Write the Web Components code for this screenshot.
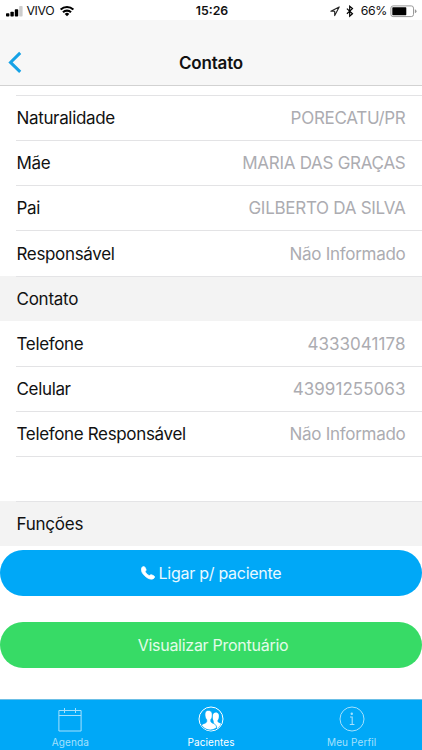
<!DOCTYPE html>
<html lang="pt-BR">
<head>
<meta charset="utf-8">
<meta name="viewport" content="width=device-width, initial-scale=1">
<title>Contato</title>
<style>
    body {
        margin: 0;
        background: #fff;
        color: #111;
        font-family: Inter, "Liberation Sans", sans-serif;
    }
</style>
</head>
<body>
<contact-app></contact-app>

<script>
class StatusBar extends HTMLElement {
    constructor() {
        super();
        this.attachShadow({ mode: "open" });
    }

    connectedCallback() {
        this.shadowRoot.innerHTML = `
            <style>
                :host {
                    display: grid;
                    grid-template-columns: 1fr auto 1fr;
                    align-items: center;
                    height: 20px;
                    flex: none;
                    padding: 0 5px 0 6px;
                    box-sizing: border-box;
                    background: #fff;
                    font-size: 12.3px;
                    line-height: 20px;
                }
                div { display: flex; align-items: center; height: 20px; }
                .right { justify-content: flex-end; }
                svg { display: block; flex: none; }
                .carrier { margin: 1px 6px 0 3.5px; letter-spacing: -0.4px; }
                .time { font-weight: 600; font-size: 12.3px; margin: 1px 0 0 1px; }
                .percent { margin: 1px 3px 0 7px; letter-spacing: -0.4px; }
            </style>
            <div>
                <svg width="17" height="20" viewBox="0 0 17 20">
                    <rect x="0" y="12.2" width="3.4" height="3.3" rx=".8"/>
                    <rect x="4.4" y="10.7" width="3.4" height="4.8" rx=".8"/>
                    <rect x="8.8" y="8.2" width="3.4" height="7.3" rx=".8"/>
                    <rect x="13.2" y="5" width="3.4" height="10.5" rx=".8" fill="#ccc"/>
                </svg>
                <span class="carrier">VIVO</span>
                <svg width="14" height="20" viewBox="0 0 14 20" fill="none" stroke="#000" stroke-width="2.1">
                    <path d="M.7 8.6a8.9 8.9 0 0 1 12.6 0"/>
                    <path d="M3 11.3a5.600 5.600 0 0 1 8 0"/>
                    <path d="M7 15.3L4.700 13a3.200 3.200 0 0 1 4.600 0z" fill="#000" stroke="none"/>
                </svg>
            </div>
            <span class="time">15:26</span>
            <div class="right">
                <svg width="10" height="20" viewBox="0 0 10 20" fill="none" stroke="#222" stroke-width="1.1">
                    <path d="M9.2 5.9L.9 10.2h3.8v4.4z" stroke-linejoin="round"/>
                </svg>
                <svg width="8" height="20" viewBox="0 0 8 20" style="margin-left:6px" fill="none" stroke="#000" stroke-width="1.2">
                    <path d="M.9 7.6l5.600 5.200-2.800 2.400V5.200l2.800 2.400L.9 12.800"/>
                </svg>
                <span class="percent">66%</span>
                <svg width="27" height="20" viewBox="0 0 27 20">
                    <rect x=".9" y="4.9" width="22.6" height="10.7" rx="2.2" fill="none" stroke="#999"/>
                    <rect x="2.3" y="6.3" width="14" height="7.9" rx=".6"/>
                    <path d="M24.8 8.2q1.7.4 1.7 2t-1.7 2z" fill="#999"/>
                </svg>
            </div>
        `;
    }
}
customElements.define("status-bar", StatusBar);

class NavHeader extends HTMLElement {
    constructor() {
        super();
        this.attachShadow({ mode: "open" });
    }

    connectedCallback() {
        this.shadowRoot.innerHTML = `
            <style>
                :host {
                    display: grid;
                    grid-template-columns: 32px 1fr 32px;
                    align-items: center;
                    height: 66px;
                    flex: none;
                    box-sizing: border-box;
                    padding-top: 20px;
                    background: #f7f7f7;
                    border-bottom: 1px solid #d2d2d2;
                }
                svg { display: block; }
                h1 {
                    margin: 0;
                    font-size: 17px;
                    font-weight: 600;
                    line-height: 22px;
                    letter-spacing: -0.2px;
                    text-align: center;
                }
            </style>
            <svg width="32" height="24" viewBox="0 0 32 24" fill="none" stroke="#15a2e6" stroke-width="3">
                <path d="M20.2 1.9L10.500 11.400l9.700 9.500"/>
            </svg>
            <h1><slot></slot></h1>
        `;
    }
}
customElements.define("nav-header", NavHeader);

class InfoRow extends HTMLElement {
    constructor() {
        super();
        this.attachShadow({ mode: "open" });
    }

    connectedCallback() {
        this.shadowRoot.innerHTML = `
            <style>
                :host {
                    display: block;
                    height: 45px;
                    flex: none;
                    padding-left: 16px;
                    font-size: 17px;
                    letter-spacing: -0.34px;
                }
                .row {
                    display: flex;
                    justify-content: space-between;
                    align-items: center;
                    height: 100%;
                    box-sizing: border-box;
                    padding: 0 16.5px 0 0.5px;
                    border-bottom: 1px solid #e3e3e5;
                    white-space: nowrap;
                }
                .value { color: #acacb1; letter-spacing: -0.28px; }
                :host([numeric]) .value { letter-spacing: 0.05px; }
                :host([short]) { height: 10px; }
                :host([tall]) { height: 46px; }
                :host([last]) .row { border: none; }
                :host([blank]) { height: 44px; }
            </style>
            <div class="row">
                <span><slot></slot></span>
                <span class="value"><slot name="value"></slot></span>
            </div>
        `;
    }
}
customElements.define("info-row", InfoRow);

class SectionTitle extends HTMLElement {
    constructor() {
        super();
        this.attachShadow({ mode: "open" });
    }

    connectedCallback() {
        this.shadowRoot.innerHTML = `
            <style>
                /* the inset hairline on top closes the row above */
                :host {
                    display: flex;
                    align-items: center;
                    height: 45px;
                    flex: none;
                    box-sizing: border-box;
                    padding: 1px 0 0 16.5px;
                    background: linear-gradient(#e4e4e6, #e4e4e6) 16px 0 / 100% 1px no-repeat #f3f3f3;
                    font-size: 17px;
                    letter-spacing: -0.25px;
                }
            </style>
            <slot></slot>
        `;
    }
}
customElements.define("section-title", SectionTitle);

class PillButton extends HTMLElement {
    constructor() {
        super();
        this.attachShadow({ mode: "open" });
    }

    connectedCallback() {
        this.shadowRoot.innerHTML = `
            <style>
                :host { display: block; flex: none; height: 46px; }
                button {
                    display: flex;
                    align-items: center;
                    justify-content: center;
                    gap: 4px;
                    width: 100%;
                    height: 100%;
                    border: none;
                    border-radius: 23px;
                    padding: 0 0 0 var(--shift, 0);
                    background: var(--pill, #00a8f7);
                    color: var(--label, #e9f9ff);
                    font: 16px Inter, "Liberation Sans", sans-serif;
                    letter-spacing: -0.27px;
                }
            </style>
            <button type="button"><slot name="icon"></slot><span><slot></slot></span></button>
        `;
    }
}
customElements.define("pill-button", PillButton);

class TabItem extends HTMLElement {
    constructor() {
        super();
        this.attachShadow({ mode: "open" });
    }

    connectedCallback() {
        this.shadowRoot.innerHTML = `
            <style>
                :host {
                    display: flex;
                    flex-direction: column;
                    align-items: center;
                    padding-top: 6px;
                    color: #a5e0fc;
                    font-size: 10px;
                    line-height: 12px;
                    letter-spacing: 0.1px;
                }
                :host([active]) { color: #fff; }
                span { margin-top: 4px; }
            </style>
            <slot name="icon"></slot>
            <span><slot></slot></span>
        `;
    }
}
customElements.define("tab-item", TabItem);

class TabBar extends HTMLElement {
    constructor() {
        super();
        this.attachShadow({ mode: "open" });
    }

    connectedCallback() {
        this.shadowRoot.innerHTML = `
            <style>
                :host {
                    display: grid;
                    grid-template-columns: repeat(3, 1fr);
                    flex: none;
                    height: 51px;
                    box-sizing: border-box;
                    border-top: 1px solid #6bbfe6;
                    background: #00a8f7;
                }
            </style>
            <slot></slot>
        `;
    }
}
customElements.define("tab-bar", TabBar);

class ContactApp extends HTMLElement {
    constructor() {
        super();
        this.attachShadow({ mode: "open" });
    }

    connectedCallback() {
        this.shadowRoot.innerHTML = `
            <style>
                :host {
                    display: flex;
                    flex-direction: column;
                    height: 750px;
                    overflow: hidden;
                }
                main {
                    display: flex;
                    flex-direction: column;
                    flex: 1;
                    min-height: 0;
                    overflow: hidden;
                }
                svg { display: block; }
                .call { margin-top: 4px; --shift: 0px; }
                .record { margin-top: 26px; --pill: #37db66; --label: #e4fbea; --shift: 4px; }
            </style>
            <status-bar></status-bar>
            <nav-header>Contato</nav-header>
            <main>
                <info-row short></info-row>
                <info-row>Naturalidade<span slot="value">PORECATU/PR</span></info-row>
                <info-row>Mãe<span slot="value">MARIA DAS GRAÇAS</span></info-row>
                <info-row>Pai<span slot="value">GILBERTO DA SILVA</span></info-row>
                <info-row last>Responsável<span slot="value">Não Informado</span></info-row>
                <section-title>Contato</section-title>
                <info-row tall numeric>Telefone<span slot="value">4333041178</span></info-row>
                <info-row numeric>Celular<span slot="value">43991255063</span></info-row>
                <info-row>Telefone Responsável<span slot="value">Não Informado</span></info-row>
                <info-row last blank></info-row>
                <section-title>Funções</section-title>
                <pill-button class="call">
                    <svg slot="icon" width="14" height="14" viewBox="0 0 14 14" fill="#fff" stroke="#fff" stroke-width=".7" stroke-linejoin="round">
                        <path d="M1.100 1.200C2.300.2 3.400.3 4.100 1.400l.9 1.900c.4 1-.3 1.500-.8 2.200.6 1.700 2.300 3.400 4.200 4.100.7-.7 1.400-1.200 2.300-.8l2.100 1c1 .6 1.100 1.500.2 2.400-1.500 1.400-4.400 1.300-7.200-.7C2.900 9.500.8 7 .4 4.300.2 3 .4 1.900 1.100 1.200z"/>
                    </svg>Ligar p/ paciente</pill-button>
                <pill-button class="record">Visualizar Prontuário</pill-button>
            </main>
            <tab-bar>
                <tab-item>
                    <svg slot="icon" width="26" height="26" viewBox="0 0 26 26" fill="none" stroke="currentColor">
                        <path d="M1.900 4.500h22.200v20.500H1.900zM1.900 9.500h22.200M7.500 2v5M18.500 2v5"/>
                    </svg>Agenda</tab-item>
                <tab-item active>
                    <svg slot="icon" width="26" height="26" viewBox="0 0 26 26">
                        <circle cx="13" cy="13" r="12" fill="none" stroke="#fff"/>
                        <path fill="#fff" d="M15 13.500c-.9-3.900.1-6.900 2.700-6.900 2.800 0 3.700 2.300 3 5.300-.2 1.300-.8 1.900-1.200 2.600 0 1.700.5 2 3.500 3-1 2.500-2.300 3.900-3.800 5-.5-2.500-1.400-3.400-3.700-4.300.5-1.400.3-3-.5-4.700z"/>
                        <path fill="#fff" stroke="#00a8f7" stroke-width=".7" d="M10.200 4.400c3.500 0 4.500 2.700 3.900 6.200-.1 1.600-.7 2.300-1.300 3-.2 1.900.1 2.700 1.400 3.300 2.500.9 4.100 1.800 4.500 4.700-4.700 3.800-11.400 3.100-15.300-2.500.9-1.100 2.600-1.600 4.100-2.200 1.200-.6 1.400-1.400 1.200-3.200-.7-.8-1.300-1.500-1.500-3.100-.7-3.700.200-6.200 3-6.200z"/>
                    </svg>Pacientes</tab-item>
                <tab-item>
                    <svg slot="icon" width="26" height="26" viewBox="0 0 26 26" fill="none" stroke="currentColor">
                        <circle cx="13" cy="13" r="12"/>
                        <circle cx="12.800" cy="7.800" r="1.200" fill="currentColor" stroke="none"/>
                        <path d="M11 11h2.200v7.500M10.800 18.500h4.600" stroke-width="1.100"/>
                    </svg>Meu Perfil</tab-item>
            </tab-bar>
        `;
    }
}
customElements.define("contact-app", ContactApp);
</script>
</body>
</html>
